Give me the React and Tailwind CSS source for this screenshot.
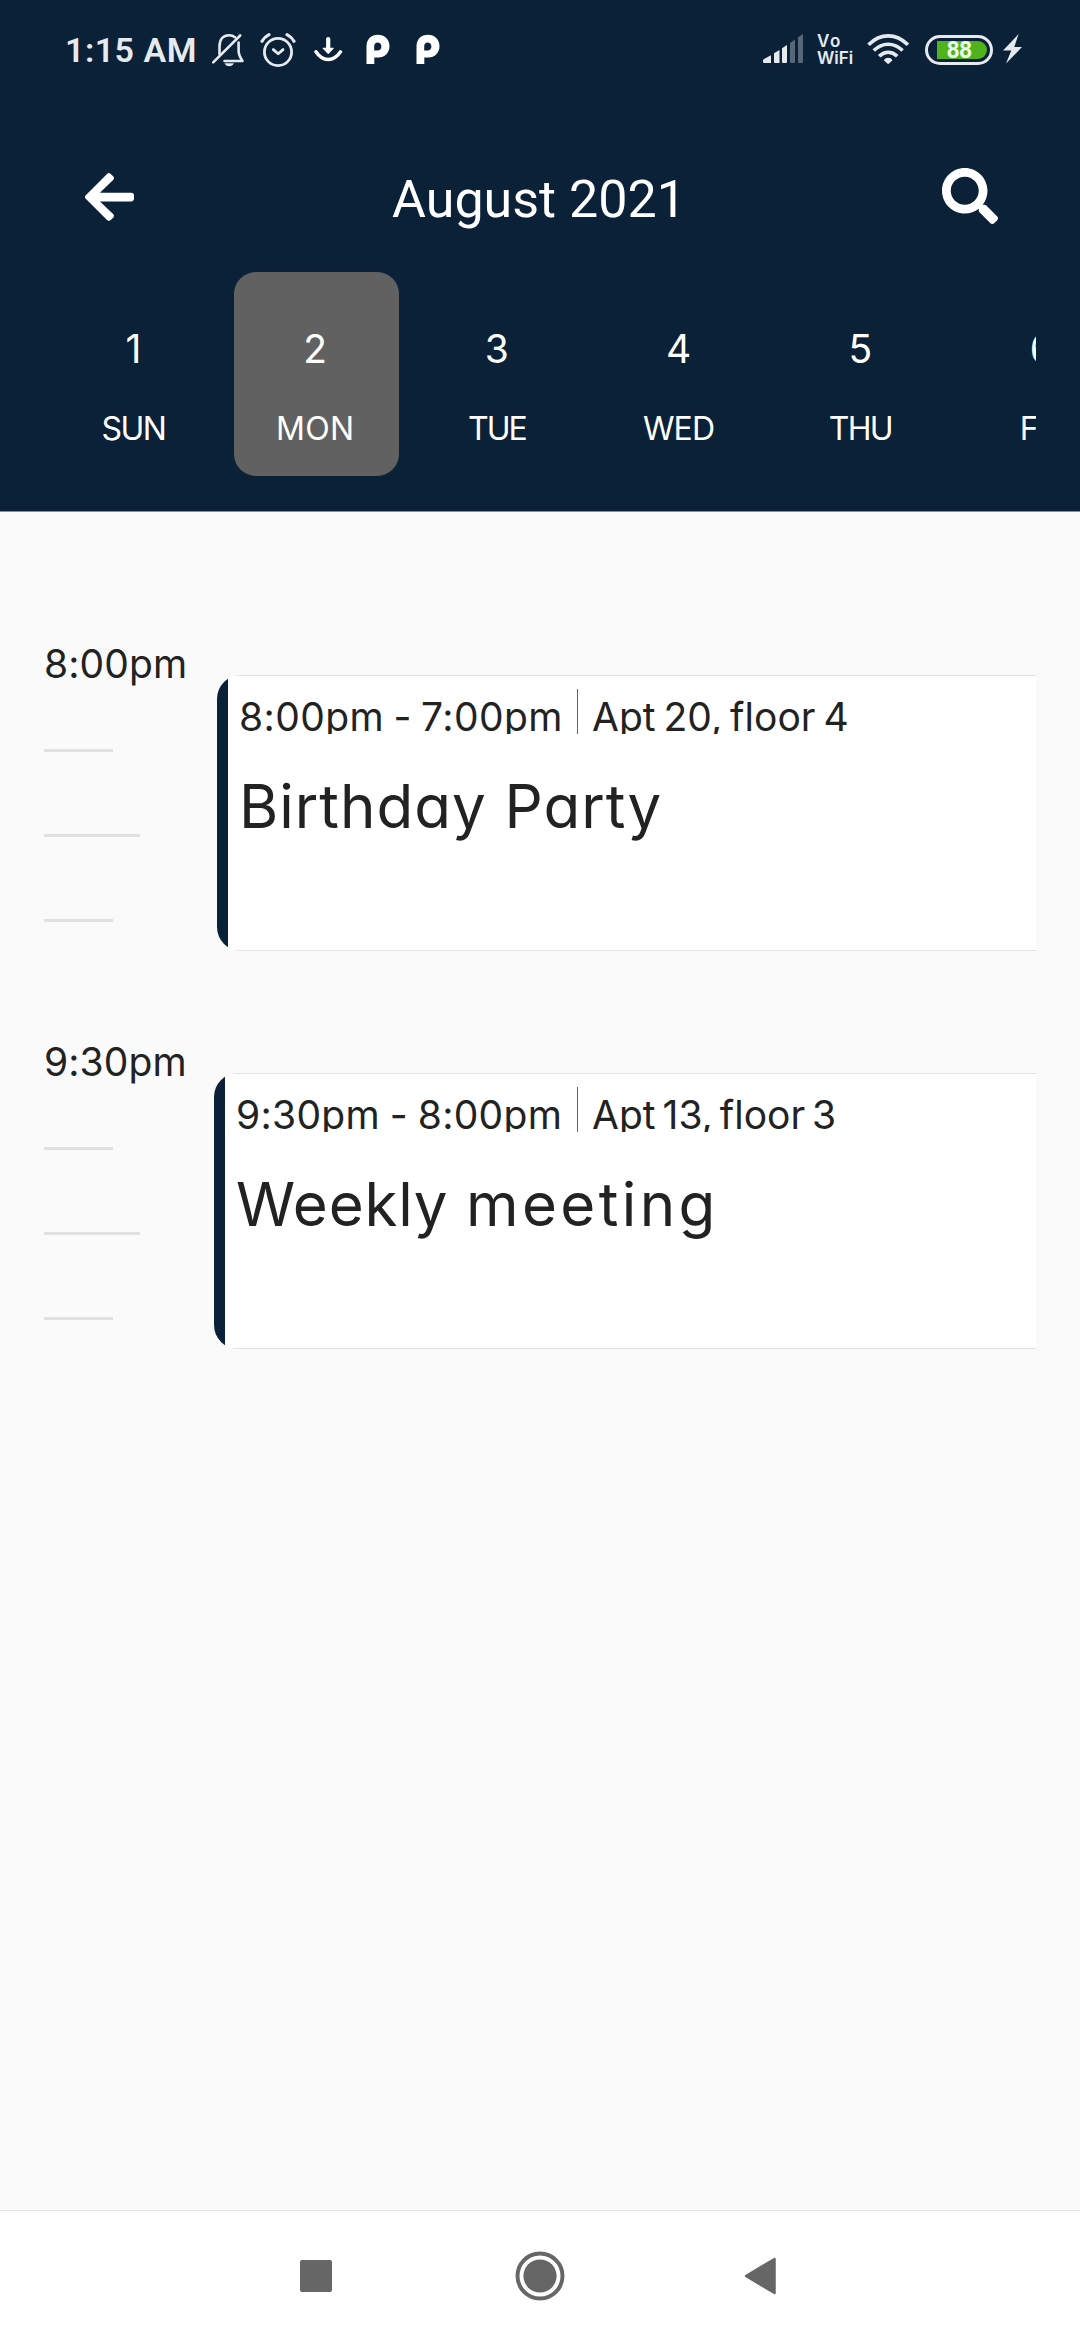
import React from "react";
import { FaArrowLeft, FaSearch } from "react-icons/fa";

const days = [
  { date: "1", name: "SUN", tracking: "tracking-[-1.5px]" },
  { date: "2", name: "MON", tracking: "tracking-[0.3px]", selected: true },
  { date: "3", name: "TUE", tracking: "tracking-[-2px]" },
  { date: "4", name: "WED", tracking: "tracking-[-0.9px]" },
  { date: "5", name: "THU", tracking: "tracking-[-1.7px]" },
  { date: "6", name: "FRI", tracking: "tracking-[-1.2px]" },
];

function StatusBar() {
  return (
    <div className="flex h-[100px] items-center text-[#e6eaef]">
      <span className="ml-[65px] w-[146px] whitespace-nowrap font-['Roboto',sans-serif] text-[34px] font-semibold leading-none tracking-[0.5px]">
        1:15 AM
      </span>
      <svg className="h-9 w-[34px]" viewBox="211 32 34 36" fill="none" stroke="currentColor" strokeWidth="2.6" strokeLinecap="round" strokeLinejoin="round">
        <path d="M219.500 54V46.500C219.500 39 223.500 35.200 229 35.200C231.500 35.200 233.500 36 235 37.200M238.600 42.500V51C238.600 55 240 57 242.500 61H224.500" />
        <path d="M240.200 35.500L213.200 62.300" />
        <path d="M224.500 63.200H234C233 65.200 231.300 66.200 229.200 66.200S225.500 65.200 224.500 63.200Z" fill="currentColor" stroke="none" />
      </svg>
      <svg className="ml-[15px] h-9 w-9" viewBox="260 32 36 36" fill="none" stroke="currentColor" strokeWidth="2.8" strokeLinecap="round" strokeLinejoin="round">
        <circle cx="278" cy="52" r="13.600" />
        <path d="M262 41.200Q264.500 37 269 34.700M294 41.200Q291.500 37 287 34.700" strokeWidth="3.200" />
        <path d="M273.300 49.600L278.200 53.800L283 49.600" />
      </svg>
      <svg className="ml-[18px] h-9 w-[29px] text-white" viewBox="314 32 29 36" fill="none" stroke="currentColor" strokeLinecap="round" strokeLinejoin="round">
        <path d="M328.200 39V49" strokeWidth="4.200" />
        <path d="M323.300 48.300H333.100L328.200 53.300Z" fill="currentColor" strokeWidth="1.200" />
        <path d="M316 51.800Q321 59.500 328.200 59.500T340.500 51.800" strokeWidth="3.400" />
      </svg>
      <PinLogo className="ml-[23px] h-9 w-6" />
      <PinLogo className="ml-[26px] h-9 w-6" />

      <svg className="ml-auto h-9 w-[41px]" viewBox="763 32 41 36" fill="currentColor">
        <path d="M763 60.500Q763 59.500 764 59L771 55.200V63H764Q763 63 763 62Z" />
        <path d="M774 53.200L779.500 50V63H775Q774 63 774 62Z" />
        <path d="M782 48.300L787 45V62Q787 63 786 63H783Q782 63 782 62Z" />
        <path d="M790 43L795 39.500V62Q795 63 794 63H791Q790 63 790 62Z" opacity=".35" />
        <path d="M798 37.300L803 34V62Q803 63 802 63H799Q798 63 798 62Z" opacity=".35" />
      </svg>
      <div className="ml-[13px] flex w-[50px] flex-col whitespace-nowrap font-['Inter',sans-serif] text-[17px] font-semibold leading-[17px]">
        <span className="tracking-[1.5px]">Vo</span>
        <span>WiFi</span>
      </div>
      <svg className="h-9 w-[42px]" viewBox="867 32 42 36" fill="none" stroke="currentColor" strokeWidth="3.600">
        <path d="M868.500 44.800Q877.500 35.900 888.200 35.900T907.900 44.800" />
        <path d="M873.800 50.500Q880.300 44.200 888.200 44.200T902.600 50.500" />
        <path d="M879.200 56.200Q883.400 52.200 888.200 52.200T897.200 56.200" />
        <path d="M884 60.500Q884.700 57.700 888.200 57.700T892.300 60.500L888.200 64.200Z" fill="currentColor" stroke="none" />
      </svg>
      <div className="ml-4 flex h-[30px] w-[68px] items-center rounded-full border-[3px] border-[#e6eaef] pl-[9px]">
        <div className="flex h-[18px] w-[50px] items-center justify-center rounded-l-[1px] rounded-r-full bg-[#50b31b] pr-[6px]">
          <span className="font-['Roboto',sans-serif] text-[23px] font-bold leading-none tracking-[-0.8px] text-[#eefbe8]">88</span>
        </div>
      </div>
      <svg className="ml-[10px] mr-[58px] h-9 w-[19px]" viewBox="1003 32 19 36" fill="currentColor">
        <path d="M1018.600 34L1003 50.500H1011.300L1006 63.500L1022 47H1014.300Z" />
      </svg>
    </div>
  );
}

function PinLogo({ className }) {
  return (
    <svg className={className + " text-white"} viewBox="366 32 24 36">
      <path
        fill="currentColor"
        fillRule="evenodd"
        d="M366.500 64V46.500C366.500 39 371.300 34.800 377.900 34.800S389.500 39.500 389.500 46.200S384.500 57.500 378.500 57.500H374.300V64ZM378 42.500A4 4 0 0 0 374.200 46.500V50.400H378A4 4 0 0 0 378 42.500Z"
      />
    </svg>
  );
}

function Header() {
  return (
    <header className="h-[512px] border-b border-[#8290a0] bg-[#0a2138] text-white">
      <StatusBar />
      <div className="flex h-[172px] items-start justify-between pl-[85px] pr-[82px]">
        <FaArrowLeft className="mt-[69px] h-[56px] w-[49px]" />
        <h1 className="ml-[2px] mt-[69px] whitespace-nowrap font-['Roboto',sans-serif] text-[52px] font-normal leading-[61px]">
          August 2021
        </h1>
        <FaSearch className="mt-[68px] h-[56px] w-[56px]" />
      </div>
      <div className="mr-11 flex gap-[16.7px] overflow-hidden pl-[52px]">
        {days.map((day) => (
          <div
            key={day.name}
            className={
              "flex h-[204px] w-[165px] shrink-0 flex-col items-center rounded-[22px] pr-[2px] pt-[57px] font-['Inter',sans-serif] " +
              (day.selected ? "bg-[#616161]" : "")
            }
          >
            <span className="text-[39px] leading-10">{day.date}</span>
            <span className={"mt-[40px] text-[32px] leading-10 " + day.tracking}>{day.name}</span>
          </div>
        ))}
      </div>
    </header>
  );
}

function TimeRail({ time }) {
  return (
    <div className="flex flex-col items-start">
      <span className="h-[106px] whitespace-nowrap text-[39px] leading-[42px] tracking-[0.1px]">{time}</span>
      <div className="h-[3px] w-[69px] bg-[#e0e0e0]" />
      <div className="mt-[82px] h-[3px] w-24 bg-[#e0e0e0]" />
      <div className="mt-[82px] h-[3px] w-[69px] bg-[#e0e0e0]" />
    </div>
  );
}

function EventCard({ className, range, place, title }) {
  return (
    <article className={"mt-8 flex h-[276px] overflow-hidden rounded-l-3xl " + className}>
      <div className="w-[11px] shrink-0 bg-[#0a2138]" />
      <div className="flex-1 border-y border-[#e0e0e0] bg-white pl-[11px] pt-[13px]">
        <div className="flex h-[45px] justify-start overflow-hidden whitespace-nowrap text-[39px] leading-[56px]">
          {range}
          <div className="h-full w-px shrink-0 bg-[#666]" />
          {place}
        </div>
        <h2 className="mt-9 whitespace-nowrap text-[60px] leading-[72px]">{title}</h2>
      </div>
    </article>
  );
}

function Schedule() {
  return (
    <main className="h-[1698px] pl-11 pr-11 pt-[131px] font-['Inter',sans-serif] text-[#222] [font-feature-settings:'cv11']">
      <section className="flex h-[398px] justify-between">
        <TimeRail time="8:00pm" />
        <EventCard
          className="w-[819px]"
          range={<span className="w-[338px] tracking-[0.4px] [word-spacing:-2px]">8:00pm - 7:00pm</span>}
          place={<span className="ml-[14px] [word-spacing:-3px]">Apt 20, floor 4</span>}
          title={<span className="tracking-[1px]">Birthday Party</span>}
        />
      </section>
      <section className="flex h-[398px] justify-between">
        <TimeRail time="9:30pm" />
        <EventCard
          className="w-[822px]"
          range={<span className="w-[341px] tracking-[0.3px] [word-spacing:-1.5px]">9:30pm - 8:00pm</span>}
          place={<span className="ml-[14px] [word-spacing:-4px]">Apt 13, floor 3</span>}
          title={
            <>
              <span className="tracking-[0.8px]">Weekly </span>
              <span className="tracking-[3.4px]">meeting</span>
            </>
          }
        />
      </section>
    </main>
  );
}

function NavigationBar() {
  return (
    <nav className="flex h-[130px] items-center border-t border-[#e4e4e4] bg-white pl-[300px] text-[#666]">
      <div className="h-8 w-8 rounded-[2px] bg-current" />
      <svg className="ml-[183px] h-[50px] w-[50px]" viewBox="0 0 50 50">
        <circle cx="25" cy="25" r="22.500" fill="none" stroke="currentColor" strokeWidth="4" />
        <circle cx="25" cy="25" r="16.600" fill="currentColor" />
      </svg>
      <svg className="ml-[179px] h-[38px] w-8" viewBox="0 0 32 38">
        <path d="M2 19L30.500 2V36Z" fill="currentColor" stroke="currentColor" strokeWidth="2.500" strokeLinejoin="round" />
      </svg>
    </nav>
  );
}

export default function App() {
  return (
    <div className="h-[2340px] w-[1080px] overflow-hidden bg-[#fafafa]">
      <Header />
      <Schedule />
      <NavigationBar />
    </div>
  );
}
